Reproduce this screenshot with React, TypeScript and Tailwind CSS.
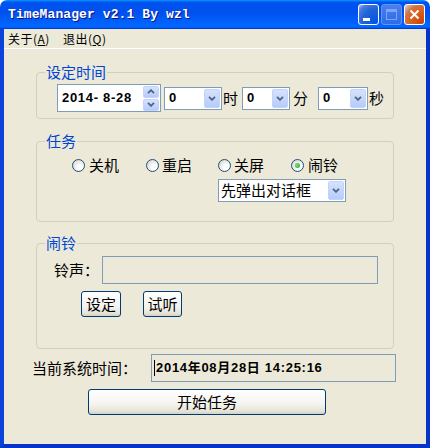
import type { ReactNode } from 'react';

const cjk = "font-['Noto_Sans_CJK_SC',sans-serif]";
const digits = "font-['Liberation_Sans','Noto_Sans_CJK_SC',sans-serif] font-bold text-[13px] tracking-[0.7px]";

function Chevron({ up = false }: { up?: boolean }) {
  return (
    <svg width="8" height="5" viewBox="0 0 8 5">
      <path d={up ? 'M1 4.2 L4 1.2 L7 4.2' : 'M1 0.8 L4 3.8 L7 0.8'} fill="none" stroke="#4D6185" strokeWidth="1.8" />
    </svg>
  );
}

function TitleBar() {
  return (
    <div className="h-[29px] flex items-center pl-[8px] pr-[5px] rounded-t-[7px] bg-[linear-gradient(to_bottom,#0997ff,#0053ee_8%,#0050ee_40%,#06f_88%,#06f_93%,#005bff_95%,#003dd7_96%,#003dd7)]">
      <span className="font-['Liberation_Mono',monospace] font-bold text-[13px] text-white [text-shadow:1px_1px_#0F1089] tracking-[0.1px]">
        TimeManager v2.1 By wzl
      </span>
      <div className="ml-auto flex gap-[2px]">
        {/* minimize */}
        <div className="relative w-[21px] h-[21px] rounded-[3px] border border-white bg-[radial-gradient(circle_at_90%_90%,#0054E9_0%,#2263D5_55%,#4479E4_80%,#A3BBEC)]">
          <div className="absolute left-[4px] top-[13px] w-[7px] h-[3px] bg-white" />
        </div>
        {/* maximize, disabled */}
        <div className="relative w-[21px] h-[21px] rounded-[3px] border border-[#7FA3F3] bg-[linear-gradient(180deg,#5C8CF0,#3A6EE6)] opacity-80">
          <div className="absolute left-[4px] top-[4px] w-[11px] h-[11px] border border-[#9DB8F3] border-t-[3px]" />
        </div>
        {/* close */}
        <div className="w-[21px] h-[21px] rounded-[3px] border border-white bg-[radial-gradient(circle_at_90%_90%,#CC4600_0%,#DC6527_55%,#CD7546_70%,#E9D2CB)] flex items-center justify-center">
          <svg width="11" height="11" viewBox="0 0 11 11">
            <path d="M1.5 1.5 L9.5 9.5 M9.5 1.5 L1.5 9.5" stroke="white" strokeWidth="2" />
          </svg>
        </div>
      </div>
    </div>
  );
}

function MenuBar() {
  return (
    <div className={`h-[20px] flex items-center border-b border-white text-[12px] text-black ${cjk}`}>
      <span className="ml-[4px] tracking-[0.5px]">
        关于(<u>A</u>)
      </span>
      <span className="ml-[13px] tracking-[0.5px]">
        退出(<u>Q</u>)
      </span>
    </div>
  );
}

function GroupBox({ title, className, children }: { title: string; className?: string; children: ReactNode }) {
  return (
    <fieldset className={`ml-[32px] w-[358px] border border-[#D0D0BF] rounded-[4px] ${className ?? ''}`}>
      <legend className={`ml-[8px] px-[1px] text-[15px] leading-[18px] text-[#0046D5] ${cjk}`}>{title}</legend>
      {children}
    </fieldset>
  );
}

function DropButton() {
  return (
    <div className="w-[16px] h-[19px] m-[1px] ml-auto shrink-0 rounded-[2px] border border-[#C3D3FD] bg-[linear-gradient(180deg,#D6E2FD,#B6CBF8)] flex items-center justify-center">
      <Chevron />
    </div>
  );
}

function ComboBox({ value, width, className }: { value: string; width: string; className?: string }) {
  return (
    <div className={`${width} h-[23px] bg-white border border-[#7F9DB9] flex items-center ${className ?? ''}`}>
      <span className={`pl-[4px] ${digits}`}>{value}</span>
      <DropButton />
    </div>
  );
}

function Radio({ label, checked = false, gap, className }: { label: string; checked?: boolean; gap: string; className?: string }) {
  return (
    <div className={`flex items-center ${className ?? ''}`}>
      <div className="w-[13px] h-[13px] rounded-full border border-[#1C5180] bg-[radial-gradient(circle_at_65%_65%,#FFFFFF_20%,#E8E6DE_60%,#CBC8BC)] flex items-center justify-center">
        {checked && <div className="w-[5px] h-[5px] rounded-full bg-[radial-gradient(circle_at_40%_40%,#7BE07A,#21A121)]" />}
      </div>
      <span className={`${gap} text-[15px] leading-[18px] text-black ${cjk}`}>{label}</span>
    </div>
  );
}

function XpButton({ children, className }: { children: ReactNode; className?: string }) {
  return (
    <div
      className={`rounded-[3px] border border-[#003C74] bg-[linear-gradient(180deg,#FFFFFF,#F4F3EE_60%,#E6E3D8_88%,#D6D0C5)] flex items-center justify-center text-[15px] text-black ${cjk} ${className ?? ''}`}
    >
      {children}
    </div>
  );
}

export default function App() {
  return (
    <div className="w-[430px] h-[448px] flex flex-col bg-white">
      <TitleBar />
      <div className="flex-1 flex flex-col bg-[#ECE9D8] border-l-[4px] border-r-[4px] border-b-[4px] border-l-[#0B44D8] border-r-[#0634C8] border-b-[#0634C8]">
        <MenuBar />

        {/* date and time */}
        <GroupBox title="设定时间" className="mt-[14px]">
          <div className="flex items-center pl-[20px] pt-[3px] pb-[6px]">
            <div className="w-[104px] h-[28px] bg-white border border-[#7F9DB9] flex items-center">
              <span className={`pl-[4px] whitespace-pre ${digits}`}>2014- 8-28</span>
              <div className="ml-auto mr-[1px] flex flex-col gap-[1px]">
                <div className="w-[16px] h-[12px] rounded-[2px] border border-[#C3D3FD] bg-[linear-gradient(180deg,#D6E2FD,#B6CBF8)] flex items-center justify-center">
                  <Chevron up />
                </div>
                <div className="w-[16px] h-[12px] rounded-[2px] border border-[#C3D3FD] bg-[linear-gradient(180deg,#D6E2FD,#B6CBF8)] flex items-center justify-center">
                  <Chevron />
                </div>
              </div>
            </div>
            <ComboBox value="0" width="w-[58px]" className="ml-[3px]" />
            <span className={`ml-[1px] text-[15px] ${cjk}`}>时</span>
            <ComboBox value="0" width="w-[48px]" className="ml-[4px]" />
            <span className={`ml-[3px] text-[15px] ${cjk}`}>分</span>
            <ComboBox value="0" width="w-[50px]" className="ml-[10px]" />
            <span className={`ml-[1px] text-[15px] ${cjk}`}>秒</span>
          </div>
        </GroupBox>

        {/* task */}
        <GroupBox title="任务" className="mt-[13px]">
          <div className="flex items-center pl-[35px] pt-[6px]">
            <Radio label="关机" gap="ml-[4px]" />
            <Radio label="重启" gap="ml-[3px]" className="ml-[27px]" />
            <Radio label="关屏" gap="ml-[3px]" className="ml-[26px]" />
            <Radio label="闹铃" gap="ml-[4px]" className="ml-[27px]" checked />
          </div>
          <div className="pl-[181px] pt-[5px] pb-[19px]">
            <div className="w-[128px] h-[23px] bg-white border border-[#7F9DB9] flex items-center">
              <span className={`pl-[2px] text-[15px] ${cjk}`}>先弹出对话框</span>
              <DropButton />
            </div>
          </div>
        </GroupBox>

        {/* alarm */}
        <GroupBox title="闹铃" className="mt-[12px]">
          <div className="flex items-center pl-[17px] pt-[4px]">
            <span className={`text-[15px] ${cjk}`}>铃声：</span>
            <div className="ml-[3px] w-[276px] h-[28px] border border-[#7F9DB9]" />
          </div>
          <div className="flex pl-[44px] pt-[7px] pb-[31px]">
            <XpButton className="w-[40px] h-[26px]">设定</XpButton>
            <XpButton className="ml-[22px] w-[39px] h-[26px]">试听</XpButton>
          </div>
        </GroupBox>

        {/* current time */}
        <div className="flex items-center mt-[5px] ml-[28px]">
          <span className={`text-[15px] ${cjk}`}>当前系统时间：</span>
          <div className="ml-[14px] w-[245px] h-[28px] border border-[#7F9DB9] flex items-center">
            <div className="ml-[2px] w-[1px] h-[16px] bg-black" />
            <span className={`ml-[1px] ${digits}`}>2014年08月28日 14:25:16</span>
          </div>
        </div>

        <XpButton className="mt-[7px] ml-[84px] w-[238px] h-[26px]">开始任务</XpButton>
      </div>
    </div>
  );
}
